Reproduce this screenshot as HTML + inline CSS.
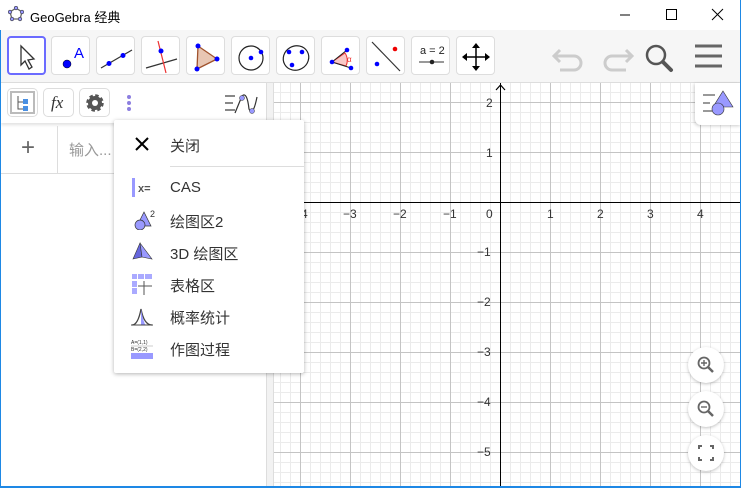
<!DOCTYPE html>
<html><head><meta charset="utf-8">
<style>
*{margin:0;padding:0;box-sizing:border-box}
body{width:741px;height:488px;overflow:hidden;background:#fff;font-family:"Liberation Sans","Noto Sans CJK SC",sans-serif;position:relative}
.abs{position:absolute}
#title{left:0;top:0;width:741px;height:30px;background:#fff}
#title span{position:absolute;left:30px;top:7px;font-size:13px;color:#000}
#tb{left:0;top:30px;width:741px;height:53px;background:#f6f6f6;border-bottom:1px solid #ddd}
.tool{position:absolute;top:6px;width:39px;height:39px;background:#fff;border:1px solid #ddd;border-radius:4px}
.tool svg{position:absolute;left:0;top:0}
#left{left:1px;top:83px;width:265px;height:404px;background:#fff}
#div{left:266px;top:83px;width:8px;height:404px;background:#f2f2f2;border-left:1px solid #ddd;border-right:1px solid #ddd}
#graph{left:274px;top:83px;width:466px;height:404px;
background-color:#fff;
background-image:
linear-gradient(to right,#c4c4c4 1px,transparent 1px),
linear-gradient(to bottom,#c4c4c4 1px,transparent 1px),
linear-gradient(to right,#ebebeb 1px,transparent 1px),
linear-gradient(to bottom,#ebebeb 1px,transparent 1px);
background-size:50px 50px,50px 50px,10px 10px,10px 10px;
background-position:26px 0,0 19px,6px 0,0 9px}
.lbl{position:absolute;font-size:12px;color:#333}
.hb{position:absolute;top:5px;width:31px;height:29px;border:1px solid #ddd;border-radius:5px;background:#fff}
#menu{left:114px;top:120px;width:190px;height:253px;background:#fff;box-shadow:0 1px 4px rgba(0,0,0,.3);border-radius:2px}
.mi{position:absolute;left:56px;font-size:15px;color:#333}
.zb{position:absolute;width:36px;height:36px;border-radius:50%;background:#fff;box-shadow:0 1px 3px rgba(0,0,0,.25)}
</style></head><body>
<div id="title" class="abs">
<svg class="abs" style="left:8px;top:6px" width="16" height="16"><polygon points="8,2 14,6 12,13 4,13 2,6" fill="none" stroke="#666" stroke-width="1.3"/><g fill="#99f" stroke="#333" stroke-width=".6"><circle cx="8" cy="2" r="1.8"/><circle cx="14" cy="6" r="1.8"/><circle cx="12" cy="13" r="1.8"/><circle cx="4" cy="13" r="1.8"/><circle cx="2" cy="6" r="1.8"/></g></svg>
<span>GeoGebra 经典</span>
<svg class="abs" style="left:618px;top:8px" width="120" height="14"><line x1="2" y1="7" x2="12" y2="7" stroke="#000"/><rect x="48.5" y="1.5" width="10" height="10" fill="none" stroke="#000"/><path d="M94 1 L105 12 M105 1 L94 12" stroke="#000"/></svg>
</div>
<div id="tb" class="abs">
<div class="tool" style="left:7px;border:2px solid #6b6bff"><svg width="37" height="37"><path d="M12 8 L12 27 L16 23 L20 31 L23 29 L19 22 L25 21 Z" fill="#fff" stroke="#333" stroke-width="1.3"/></svg></div>
<div class="tool" style="left:51px"><svg width="39" height="39"><circle cx="15" cy="27" r="4" fill="#00f" stroke="#000" stroke-width=".5"/><text x="22" y="21" font-size="15" fill="#00f" font-family="Liberation Sans">A</text></svg></div>
<div class="tool" style="left:96px"><svg width="39" height="39"><line x1="4" y1="31" x2="35" y2="13" stroke="#333" stroke-width="1.2"/><circle cx="12" cy="26.5" r="2.5" fill="#00f"/><circle cx="26" cy="18.5" r="2.5" fill="#00f"/></svg></div>
<div class="tool" style="left:141px"><svg width="39" height="39"><line x1="4" y1="31" x2="35" y2="22" stroke="#333" stroke-width="1.2"/><line x1="16" y1="4" x2="24" y2="36" stroke="#e33" stroke-width="1.2"/><circle cx="19" cy="14" r="2.5" fill="#00f"/></svg></div>
<div class="tool" style="left:186px"><svg width="39" height="39"><polygon points="11,9 30,22 10,32" fill="#e8c6b3" stroke="#a0522d" stroke-width="1.3"/><circle cx="11" cy="9" r="2.5" fill="#00f"/><circle cx="30" cy="22" r="2.5" fill="#00f"/><circle cx="10" cy="32" r="2.5" fill="#00f"/></svg></div>
<div class="tool" style="left:231px"><svg width="39" height="39"><circle cx="19" cy="21" r="12" fill="none" stroke="#222" stroke-width="1.2"/><circle cx="19" cy="21" r="2.3" fill="#00f"/><circle cx="29" cy="15" r="2.3" fill="#00f"/></svg></div>
<div class="tool" style="left:276px"><svg width="39" height="39"><ellipse cx="19" cy="21" rx="13" ry="12" transform="rotate(-30 19 21)" fill="none" stroke="#222" stroke-width="1.2"/><circle cx="12" cy="15" r="2.3" fill="#00f"/><circle cx="25" cy="15" r="2.3" fill="#00f"/><circle cx="15" cy="28" r="2.3" fill="#00f"/></svg></div>
<div class="tool" style="left:321px"><svg width="39" height="39"><path d="M10 25 L23 16 A13 13 0 0 1 24 29 Z" fill="#f8c8c8" stroke="#e33"/><line x1="10" y1="25" x2="25" y2="13" stroke="#222"/><line x1="10" y1="25" x2="29" y2="31" stroke="#222"/><circle cx="10" cy="25" r="2.3" fill="#00f"/><circle cx="25" cy="13" r="2.3" fill="#00f"/><circle cx="29" cy="31" r="2.3" fill="#00f"/><text x="25" y="25" font-size="8" fill="#e33">α</text></svg></div>
<div class="tool" style="left:366px"><svg width="39" height="39"><line x1="5" y1="5" x2="33" y2="34" stroke="#333" stroke-width="1.2"/><circle cx="28" cy="12" r="2.3" fill="#e00"/><circle cx="10" cy="27" r="2.3" fill="#00f"/></svg></div>
<div class="tool" style="left:411px"><svg width="39" height="39"><text x="8" y="17" font-size="11" fill="#222" font-family="Liberation Sans">a = 2</text><line x1="7" y1="25" x2="32" y2="25" stroke="#333"/><circle cx="20" cy="25" r="2.3" fill="#222"/></svg></div>
<div class="tool" style="left:456px"><svg width="39" height="39"><path d="M19 8 L19 32 M7 20 L31 20" stroke="#000" stroke-width="1.5"/><path d="M19 6 L15 11 L23 11Z M19 34 L15 29 L23 29Z M5 20 L10 16 L10 24Z M33 20 L28 16 L28 24Z" fill="#000"/></svg></div>
<svg class="abs" style="left:550px;top:10px" width="191" height="34">
<path d="M10 10 L4 16 L10 22 M5 16 L24 16 A7 7 0 0 1 24 30 L10 30" fill="none" stroke="#ccc" stroke-width="3"/>
<path d="M76 10 L82 16 L76 22 M81 16 L62 16 A7 7 0 0 0 62 30 L76 30" fill="none" stroke="#ccc" stroke-width="3"/>
<circle cx="106" cy="15" r="9" fill="none" stroke="#555" stroke-width="2.5"/><line x1="113" y1="22" x2="121" y2="30" stroke="#555" stroke-width="4" stroke-linecap="round"/>
<path d="M145 6 H172 M145 16 H172 M145 26 H172" stroke="#666" stroke-width="3"/>
</svg>
</div>
<div id="left" class="abs">
<div style="position:absolute;left:0;top:0;width:265px;height:40px;box-shadow:0 2px 3px rgba(0,0,0,.12)">
<div class="hb" style="left:6px"><svg width="31" height="29"><rect x="3" y="3" width="23" height="21" fill="none" stroke="#bbb" stroke-width="2"/><path d="M10 7 V20 H16 M10 13 H16" stroke="#555" fill="none"/><rect x="15" y="10" width="5" height="5" fill="#4a90e2"/><rect x="15" y="17" width="5" height="5" fill="#4a90e2"/></svg></div>
<div class="hb" style="left:42px"><span style="position:absolute;left:7px;top:4px;font-family:'Liberation Serif',serif;font-style:italic;font-size:17px;color:#333">fx</span></div>
<div class="hb" style="left:78px"><svg width="31" height="29"><g transform="translate(15 14)"><circle r="6.5" fill="none" stroke="#555" stroke-width="4.5" stroke-dasharray="3 2.1"/><circle r="7" fill="#555"/><circle r="3" fill="#fff"/></g></svg></div>
<svg class="abs" style="left:124px;top:12px" width="8" height="20"><circle cx="4" cy="2" r="2" fill="#8c7ee0"/><circle cx="4" cy="8" r="2" fill="#8c7ee0"/><circle cx="4" cy="14" r="2" fill="#8c7ee0"/></svg>
<svg class="abs" style="left:222px;top:10px" width="38" height="24"><path d="M2 3 H12 M2 10 H10 M2 17 H12" stroke="#888" stroke-width="2"/><path d="M12 20 L19 3 Q24 -2 26 16 Q30 24 34 4" fill="none" stroke="#333" stroke-width="1.2"/><circle cx="19" cy="5" r="2.5" fill="#99f" stroke="#333" stroke-width=".5"/><circle cx="29" cy="18" r="2.5" fill="#99f" stroke="#333" stroke-width=".5"/></svg>
</div>
<div style="position:absolute;left:0;top:43px;width:265px;height:48px;border-bottom:1px solid #ddd">
<div style="position:absolute;left:56px;top:0;width:1px;height:48px;background:#ddd"></div>
<span style="position:absolute;left:20px;top:8px;font-size:24px;color:#666;font-weight:300">+</span>
<span style="position:absolute;left:68px;top:13px;font-size:15px;color:#999">输入...</span>
</div>
</div>
<div id="div" class="abs"></div>
<div id="graph" class="abs">
<div class="abs" style="left:0;top:119px;width:466px;height:1px;background:#000"></div>
<div class="abs" style="left:226px;top:0;width:1px;height:404px;background:#000"></div>
<svg class="abs" style="left:221px;top:0" width="12" height="8"><path d="M1 7 L5.5 2 L10 7" fill="none" stroke="#000" stroke-width="1.2"/></svg>
<span class="lbl" style="left:20px;top:124px">−4</span>
<span class="lbl" style="left:69px;top:124px">−3</span>
<span class="lbl" style="left:119px;top:124px">−2</span>
<span class="lbl" style="left:169px;top:124px">−1</span>
<span class="lbl" style="left:212px;top:124px">0</span>
<span class="lbl" style="left:273px;top:124px">1</span>
<span class="lbl" style="left:323px;top:124px">2</span>
<span class="lbl" style="left:373px;top:124px">3</span>
<span class="lbl" style="left:423px;top:124px">4</span>
<span class="lbl" style="left:212px;top:13px">2</span>
<span class="lbl" style="left:212px;top:63px">1</span>
<span class="lbl" style="left:203px;top:162px">−1</span>
<span class="lbl" style="left:203px;top:212px">−2</span>
<span class="lbl" style="left:203px;top:262px">−3</span>
<span class="lbl" style="left:203px;top:312px">−4</span>
<span class="lbl" style="left:203px;top:362px">−5</span>
<div class="abs" style="left:421px;top:0;width:46px;height:42px;background:#fff;border-radius:0 0 0 6px;box-shadow:-1px 1px 3px rgba(0,0,0,.2)">
<svg width="46" height="42"><path d="M8 12 H20 M8 20 H15 M8 28 H17" stroke="#999" stroke-width="2"/><polygon points="28,8 38,24 18,24" fill="#99f" stroke="#333" stroke-width=".6"/><circle cx="23" cy="26" r="6" fill="#99f" stroke="#333" stroke-width=".6"/></svg></div>
<div class="zb" style="left:414px;top:264px"><svg width="36" height="36"><circle cx="16" cy="16" r="5.5" fill="none" stroke="#666" stroke-width="1.8"/><path d="M13 16 H19 M16 13 V19" stroke="#666" stroke-width="1.4"/><line x1="20" y1="20" x2="25" y2="25" stroke="#666" stroke-width="2.5"/></svg></div>
<div class="zb" style="left:414px;top:308px"><svg width="36" height="36"><circle cx="16" cy="16" r="5.5" fill="none" stroke="#666" stroke-width="1.8"/><path d="M13 16 H19" stroke="#666" stroke-width="1.4"/><line x1="20" y1="20" x2="25" y2="25" stroke="#666" stroke-width="2.5"/></svg></div>
<div class="zb" style="left:414px;top:352px"><svg width="36" height="36"><path d="M11 14 V11 H14 M22 11 H25 V14 M25 22 V25 H22 M14 25 H11 V22" fill="none" stroke="#666" stroke-width="2"/></svg></div>
</div>
<div id="menu" class="abs">
<svg class="abs" style="left:20px;top:16px" width="16" height="16"><path d="M2 2 L14 14 M14 2 L2 14" stroke="#000" stroke-width="2"/></svg>
<span class="mi" style="top:15px">关闭</span>
<div class="abs" style="left:56px;top:46px;width:134px;height:1px;background:#ddd"></div>
<svg class="abs" style="left:16px;top:58px" width="26" height="20"><rect x="2" y="0" width="3" height="19" fill="#99f"/><text x="8" y="14" font-size="11" fill="#555" font-weight="bold">x=</text></svg>
<span class="mi" style="top:59px">CAS</span>
<svg class="abs" style="left:16px;top:88px" width="26" height="22"><polygon points="14,4 21,18 7,18" fill="#99f" stroke="#333" stroke-width=".7"/><circle cx="10" cy="17" r="5" fill="#99f" stroke="#333" stroke-width=".7"/><text x="20" y="9" font-size="9" fill="#333">2</text></svg>
<span class="mi" style="top:91px">绘图区2</span>
<svg class="abs" style="left:16px;top:120px" width="26" height="22"><polygon points="10,3 3,19 12,17" fill="#66d" stroke="#333" stroke-width=".6"/><polygon points="10,3 12,17 22,19" fill="#99f" stroke="#333" stroke-width=".6"/></svg>
<span class="mi" style="top:123px">3D 绘图区</span>
<svg class="abs" style="left:16px;top:153px" width="26" height="22"><rect x="2" y="1" width="5" height="5" fill="#aaf"/><rect x="8" y="1" width="6" height="5" fill="#aaf"/><rect x="15" y="1" width="7" height="5" fill="#aaf"/><rect x="2" y="8" width="5" height="6" fill="#aaf"/><rect x="2" y="15" width="5" height="6" fill="#aaf"/><path d="M8 13 H22 M14 8 V22" stroke="#555"/></svg>
<span class="mi" style="top:155px">表格区</span>
<svg class="abs" style="left:16px;top:185px" width="26" height="22"><path d="M2 20 Q8 20 11 4 Q14 20 22 20" fill="none" stroke="#444" stroke-width="1.3"/><path d="M11 4 Q14 20 16 20 L11 20Z" fill="#99f"/><line x1="1" y1="20" x2="23" y2="20" stroke="#444"/></svg>
<span class="mi" style="top:187px">概率统计</span>
<svg class="abs" style="left:16px;top:218px" width="26" height="22"><text x="1" y="6" font-size="5" fill="#333">A=(1,1)</text><text x="1" y="13" font-size="5" fill="#333">B=(2,2)</text><rect x="1" y="15" width="22" height="6" fill="#99f"/><line x1="1" y1="8" x2="23" y2="8" stroke="#999" stroke-width=".5"/></svg>
<span class="mi" style="top:219px">作图过程</span>
</div>
<div class="abs" style="left:0;top:30px;width:1px;height:458px;background:#1e88e5"></div>
<div class="abs" style="left:740px;top:0;width:1px;height:488px;background:#1e88e5"></div>
<div class="abs" style="left:0;top:486px;width:741px;height:2px;background:#1e88e5"></div>
</body></html>
